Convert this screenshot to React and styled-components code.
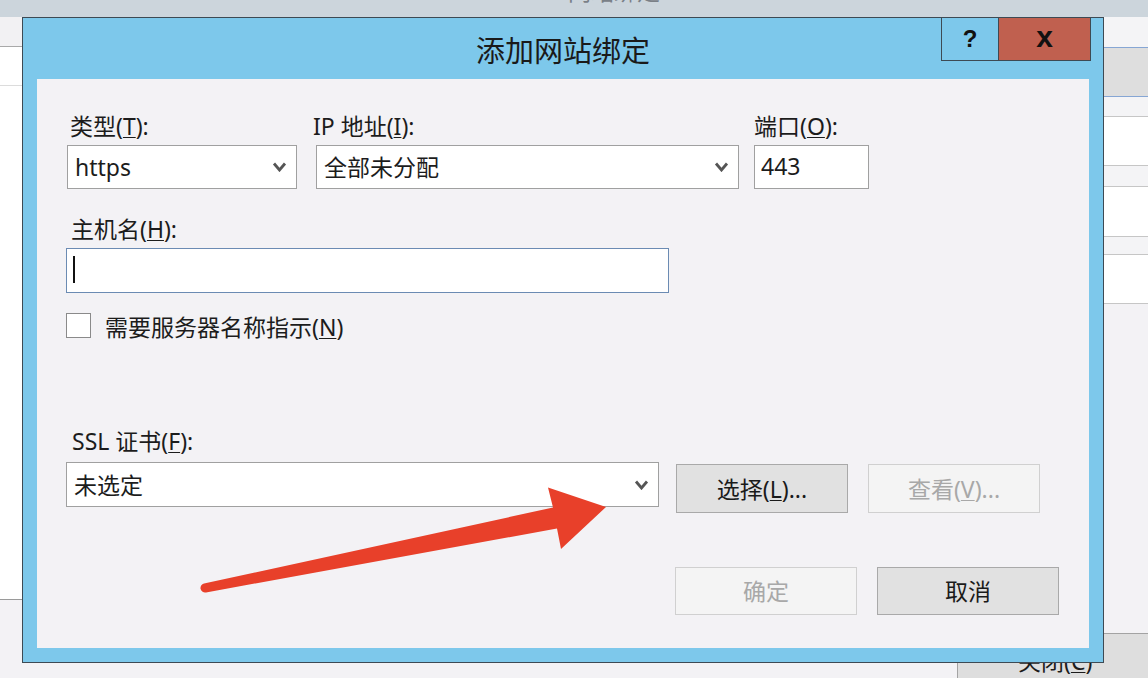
import React from "react";
import styled, { createGlobalStyle } from "styled-components";

const GlobalStyle = createGlobalStyle`
  * { box-sizing: border-box; }
  html, body { margin: 0; padding: 0; }
  body {
    font-family: "Noto Sans", "Noto Sans CJK SC", sans-serif;
    color: #1c1c1c;
  }
`;

const rightRows = [
  { h: 30, bg: "#f4f4f6", line: "#86a6d4" },
  { h: 48, bg: "#dedede", line: "#86a6d4" },
  { h: 19, bg: "#f4f4f6", line: "#c6c6c6" },
  { h: 48, bg: "#ffffff", line: "#c6c6c6" },
  { h: 20, bg: "#f4f4f6", line: "#c6c6c6" },
  { h: 49, bg: "#ffffff", line: "#c6c6c6" },
  { h: 17, bg: "#f4f4f6", line: "#c6c6c6" },
  { h: 48, bg: "#ffffff", line: "#c6c6c6" },
];

function Chevron() {
  return (
    <svg width="15" height="10" viewBox="0 0 15 10">
      <polyline points="2,1.5 7.5,8 13,1.5" fill="none" stroke="#555555" strokeWidth="2.8" />
    </svg>
  );
}

export default function App() {
  return (
    <Screen>
      <GlobalStyle />

      <BackWindow>
        <TopStrip>
          <TopCaption>网站绑定</TopCaption>
        </TopStrip>
        <BackBody>
          <LeftPane>
            <PaneRow $h={29} $bg="#f2f1f3" $line="#a9a9a9" />
            <PaneRow $h={38} $bg="#ffffff" $line="#dcdcdc" />
            <PaneRow $h={513} $bg="#ffffff" $line="#9a9a9a" />
          </LeftPane>
          <BackSpacer />
          <RightPane>
            {rightRows.map((r, i) => (
              <PaneRow key={i} $h={r.h} $bg={r.bg} $line={r.line} />
            ))}
          </RightPane>
        </BackBody>
        <BackFooter>
          <BackButton>关闭(<Key>C</Key>)</BackButton>
        </BackFooter>
      </BackWindow>

      <Dialog>
        <TitleBar>
          <Title>添加网站绑定</Title>
          <TitleButtons>
            <HelpButton>?</HelpButton>
            <CloseButton>x</CloseButton>
          </TitleButtons>
        </TitleBar>

        <Content>
          <TopRow>
            <Field $w={230} $ml={0}>
              <Label $indent={3}>类型(<Key>T</Key>):</Label>
              <Select>
                <span>https</span>
                <Chevron />
              </Select>
            </Field>
            <Field $w={423} $ml={19}>
              <Label $indent={-3}>IP 地址(<Key>I</Key>):</Label>
              <Select>
                <span>全部未分配</span>
                <Chevron />
              </Select>
            </Field>
            <Field $w={115} $ml={15}>
              <Label $indent={0}>端口(<Key>O</Key>):</Label>
              <TextBox>443</TextBox>
            </Field>
          </TopRow>

          <Field $w={603} $ml={-1} $mt={25}>
            <Label $indent={5}>主机名(<Key>H</Key>):</Label>
            <TextBox $focused>
              <Caret />
            </TextBox>
          </Field>

          <CheckRow>
            <CheckBox />
            <span>需要服务器名称指示(<Key>N</Key>)</span>
          </CheckRow>

          <Field $w={593} $ml={-1} $mt={88}>
            <Label $indent={6}>SSL 证书(<Key>F</Key>):</Label>
          </Field>
          <CertRow>
            <Select $w={593} $h={45}>
              <span>未选定</span>
              <Chevron />
            </Select>
            <Button $w={172} $h={49} $ml={17}>选择(<Key>L</Key>)...</Button>
            <Button $w={172} $h={49} $ml={20} disabled>查看(<Key>V</Key>)...</Button>
          </CertRow>

          <FooterRow>
            <Button $w={182} $h={48} disabled>确定</Button>
            <Button $w={182} $h={48}>取消</Button>
          </FooterRow>
        </Content>
      </Dialog>

      <Annotation width="1148" height="678" viewBox="0 0 1148 678">
        <path
          d="M204,583.6 L553,507.5 L548,487.5 L606,507 L561,549 L557,528.5 L206,592.4 A4.5,4.5 0 0 1 204,583.6 Z"
          fill="#e8402a"
        />
      </Annotation>
    </Screen>
  );
}

const Screen = styled.div`
  position: relative;
  width: 1148px;
  height: 678px;
  overflow: hidden;
  background: #f3f2f5;
`;

const BackWindow = styled.div`
  display: flex;
  flex-direction: column;
  width: 100%;
  height: 100%;
`;

const TopStrip = styled.div`
  height: 17px;
  background: #ccd5dc;
  display: flex;
  justify-content: center;
  overflow: hidden;
`;

const TopCaption = styled.div`
  margin-top: -22px;
  margin-left: 80px;
  font-size: 23px;
  line-height: 26px;
  color: #7a8087;
`;

const BackBody = styled.div`
  flex: 1;
  display: flex;
`;

const LeftPane = styled.div`
  width: 22px;
  display: flex;
  flex-direction: column;
`;

const RightPane = styled.div`
  width: 46px;
  display: flex;
  flex-direction: column;
`;

const BackSpacer = styled.div`
  flex: 1;
`;

const PaneRow = styled.div`
  height: ${(p) => p.$h + 1}px;
  background: ${(p) => p.$bg};
  border-bottom: 1px solid ${(p) => p.$line};
`;

const BackFooter = styled.div`
  height: 45px;
  display: flex;
  justify-content: flex-end;
`;

const BackButton = styled.div`
  width: 191px;
  border-left: 1px solid #a3a3a3;
  border-top: 1px solid #a3a3a3;
  background: #dedede;
  padding: 12px 0 0 60px;
  font-size: 23px;
  line-height: 30px;
  white-space: nowrap;
`;

const Key = styled.span`
  text-decoration: underline;
  text-underline-offset: 2px;
  text-decoration-thickness: 1px;
`;

const Dialog = styled.div`
  position: absolute;
  left: 22px;
  top: 17px;
  width: 1082px;
  height: 646px;
  border: 1px solid #3d4a54;
  background: #7dc8eb;
  padding: 0 14px 14px;
  display: flex;
  flex-direction: column;
`;

const TitleBar = styled.div`
  position: relative;
  height: 61px;
  margin: 0 -14px;
  display: flex;
  align-items: center;
  justify-content: center;
`;

const Title = styled.div`
  font-family: "Noto Sans CJK SC", sans-serif;
  font-size: 29px;
  line-height: 34px;
  color: #1a1a1a;
`;

const TitleButtons = styled.div`
  position: absolute;
  top: 0;
  right: 12px;
  display: flex;
`;

const HelpButton = styled.div`
  width: 57px;
  height: 43px;
  border-left: 1px solid #3d4a54;
  border-bottom: 1px solid #3d4a54;
  display: flex;
  align-items: center;
  justify-content: center;
  font-family: "Liberation Sans", Arial, sans-serif;
  font-weight: bold;
  font-size: 24px;
  color: #111;
`;

const CloseButton = styled.div`
  width: 93px;
  height: 43px;
  background: #c0604f;
  border-left: 1px solid #3d4a54;
  border-bottom: 1px solid #3d4a54;
  border-right: 1px solid #3d4a54;
  display: flex;
  align-items: center;
  justify-content: center;
  font-family: "Liberation Sans", Arial, sans-serif;
  font-weight: bold;
  font-size: 30px;
  line-height: 30px;
  padding-bottom: 5px;
  color: #111;
`;

const Content = styled.div`
  flex: 1;
  background: #f3f2f5;
  padding: 32px 30px 0 30px;
  display: flex;
  flex-direction: column;
  font-size: 23px;
`;

const TopRow = styled.div`
  display: flex;
  align-items: flex-start;
`;

const Field = styled.div`
  display: flex;
  flex-direction: column;
  width: ${(p) => p.$w}px;
  margin-left: ${(p) => p.$ml || 0}px;
  margin-top: ${(p) => p.$mt || 0}px;
`;

const Label = styled.div`
  height: 30px;
  line-height: 30px;
  margin-bottom: 4px;
  margin-left: ${(p) => p.$indent}px;
  white-space: nowrap;
`;

const Select = styled.div`
  width: ${(p) => (p.$w ? `${p.$w}px` : "100%")};
  height: ${(p) => p.$h || 44}px;
  border: 1px solid #a0a0a0;
  background: #ffffff;
  display: flex;
  align-items: center;
  justify-content: space-between;
  padding: 0 9px 0 7px;
  line-height: 30px;
`;

const TextBox = styled.div`
  height: ${(p) => (p.$focused ? 45 : 44)}px;
  border: 1px solid ${(p) => (p.$focused ? "#6b8bb3" : "#a0a0a0")};
  background: #ffffff;
  display: flex;
  align-items: center;
  padding: 0 6px 2px;
  line-height: 30px;
`;

const Caret = styled.div`
  width: 2px;
  height: 27px;
  background: #111;
`;

const CheckRow = styled.div`
  margin-top: 20px;
  margin-left: -1px;
  height: 25px;
  display: flex;
  align-items: center;
  gap: 14px;
  white-space: nowrap;
`;

const CheckBox = styled.div`
  width: 25px;
  height: 25px;
  border: 1px solid #8a8a8a;
  background: #ffffff;
`;

const CertRow = styled.div`
  display: flex;
  align-items: flex-start;
  margin-left: -1px;
  margin-top: 2px;
`;

const Button = styled.button`
  width: ${(p) => p.$w}px;
  height: ${(p) => p.$h}px;
  margin-left: ${(p) => p.$ml || 0}px;
  margin-top: ${(p) => (p.$ml ? 2 : 0)}px;
  padding: 0;
  font-family: "Noto Sans", "Noto Sans CJK SC", sans-serif;
  font-size: 23px;
  line-height: 30px;
  color: #1a1a1a;
  background: #e1e1e1;
  border: 1px solid #a9a9a9;
  border-radius: 0;

  &:disabled {
    color: #a8a8a8;
    background: #f4f4f4;
    border-color: #d0d0d0;
  }
`;

const FooterRow = styled.div`
  margin-top: 54px;
  display: flex;
  justify-content: flex-end;
  gap: 20px;
`;

const Annotation = styled.svg`
  position: absolute;
  left: 0;
  top: 0;
  pointer-events: none;
`;
